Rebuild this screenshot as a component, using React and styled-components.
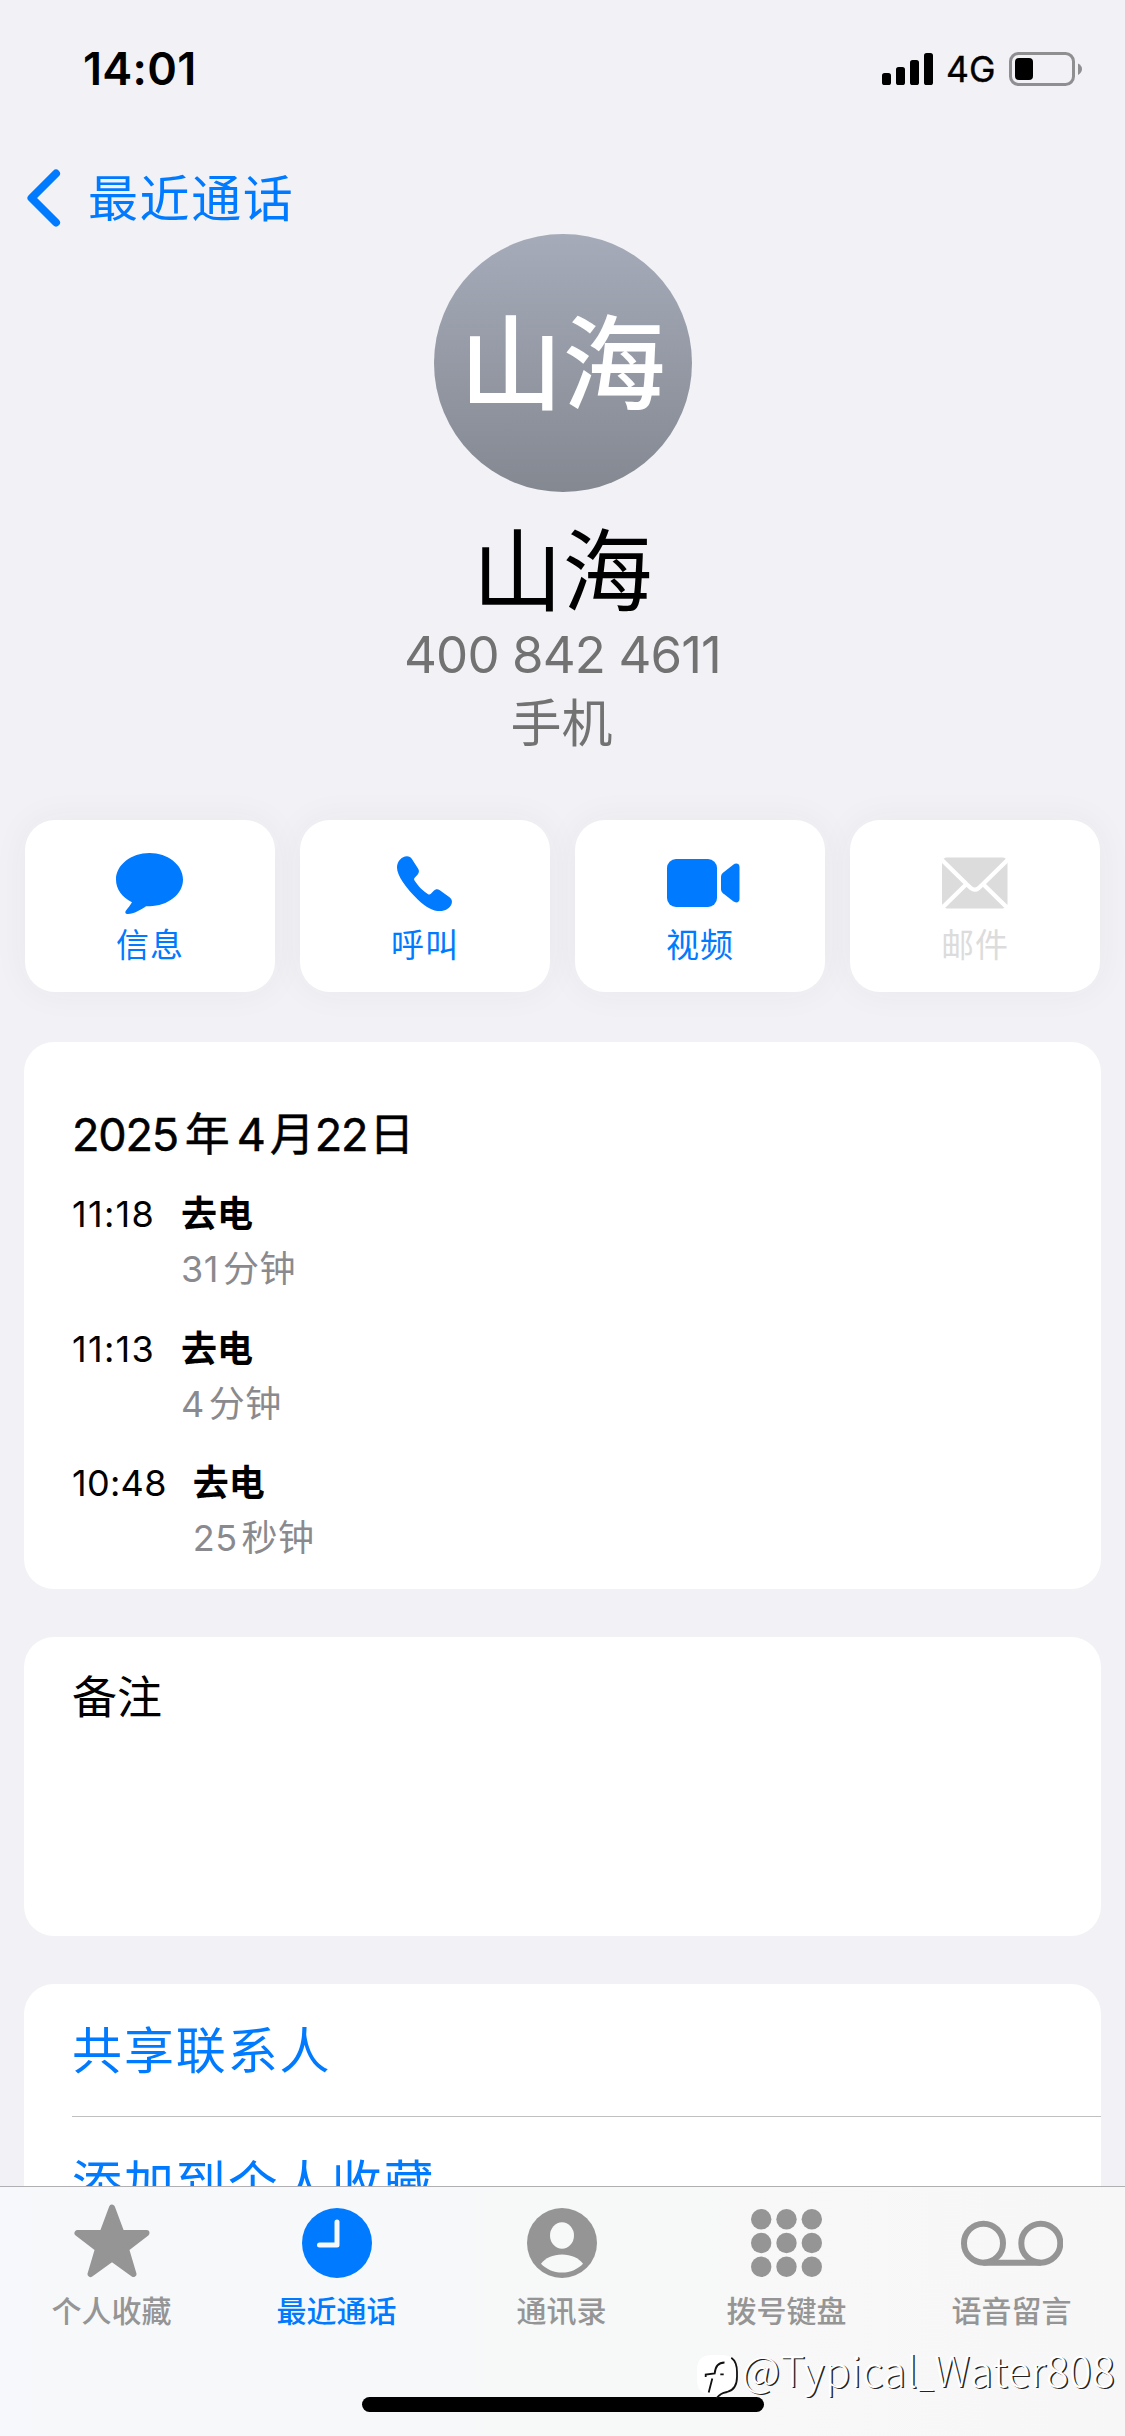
import React from 'react';
import styled, {createGlobalStyle} from 'styled-components';

const BLUE = "#007aff";
const GRAY = "#959595";

const dateParts = [
    {text: "2025", gap: 7},
    {text: "年", gap: 7},
    {text: "4", gap: 5},
    {text: "月", gap: 0},
    {text: "22", gap: 2},
    {text: "日", gap: 0},
];

// narrow digits need a little more tracking
const calls = [
    {time: "11:18", tracking: 1.3, type: "去电", num: "31", unit: "分钟"},
    {time: "11:13", tracking: 1.3, type: "去电", num: "4", unit: "分钟"},
    {time: "10:48", tracking: 0.3, type: "去电", num: "25", unit: "秒钟"},
];

const SignalIcon = () => (
    <svg width="51" height="32" viewBox="0 0 51 32">
        <rect x="0" y="20" width="9" height="12" rx="2.6"/>
        <rect x="14" y="14" width="9" height="18" rx="2.6"/>
        <rect x="28" y="7" width="9" height="25" rx="2.6"/>
        <rect x="42" y="0" width="9" height="32" rx="2.6"/>
    </svg>
);

const BatteryIcon = () => (
    <svg width="74" height="34" viewBox="0 0 74 34">
        <rect x="1.5" y="1.5" width="63" height="31" rx="8" fill="none" stroke="#8f8f91" strokeWidth="3"/>
        <path d="M69 11.5Q73 13.5 73 17T69 23Z" fill="#8f8f91"/>
        <rect x="6" y="6" width="18" height="22" rx="4"/>
    </svg>
);

const MessageIcon = () => (
    <svg width="69" height="61" viewBox="0 0 69 61">
        <path fill="currentColor" d="M33.5 0C51.8 0 67 11.8 67 26.6S51.8 53.2 33.5 53.2H30C25.8 56.3 17.5 61 12 61C9.3 61 8.7 59.3 10 57.4C12 54.8 14.5 52.2 16 49.3C6.2 44.7 0 36.5 0 26.6C0 11.8 15.2 0 33.5 0Z"/>
    </svg>
);

const PhoneIcon = () => (
    <svg width="57" height="55" viewBox="0 0 57 55">
        <path fill="currentColor" d="M10 .2C12.2 .2 13.7 1.2 14.9 3L21 12.6C22.4 14.8 22.2 16.7 20.7 18.6L17.7 21.8C16.8 22.8 17 23.6 17.7 24.8C21.3 30.3 26.3 35.4 30.8 38C32 38.8 32.9 38.7 33.9 37.7L36.5 35C38.6 33 40.5 32.7 42.8 34.2L52.2 41C54.8 42.9 55.4 44.9 54.7 47.5C53.1 52.4 48.4 55 42.8 55C36 55 29.1 51.5 21 43.7C9 32.1 0 19.5 0 11.5C0 5.5 4.5 .2 10 .2Z"/>
    </svg>
);

const VideoIcon = () => (
    <svg width="79" height="48" viewBox="-6 0 79 48">
        <rect x="0" y="0" width="50" height="48" rx="9" fill="currentColor"/>
        <path fill="currentColor" d="M54 18.2C54 16.2 54.5 15.1 56 13.7L66.2 5.7C69 3.6 72.5 4.5 72.5 8V40C72.5 43.5 69 44.4 66.2 42.3L56 34.3C54.5 32.9 54 31.8 54 29.8Z"/>
    </svg>
);

const MailIcon = () => (
    <svg width="66" height="52" viewBox="0 0 66 52">
        <rect x="0" y="0.5" width="65.5" height="51" rx="5" fill="currentColor"/>
        <path d="M-1 2L24.5 27L29 31.2Q32.7 34 36.5 31.2L41 27L66.5 2M-1 52L24.5 27M41 27L66.5 52" fill="none" stroke="#fff" strokeWidth="4.2"/>
    </svg>
);

const StarIcon = () => (
    <svg width="76" height="80" viewBox="0 -1 76 80">
        <path d="M38 3.5L47.5 29H72.5L52 44.8L59.5 70L38 54.5L16.5 70L24 44.8L3.5 29H28.5Z" fill="currentColor" stroke="currentColor" strokeWidth="6" strokeLinejoin="round"/>
    </svg>
);

const ClockIcon = () => (
    <svg width="70" height="70" viewBox="0 0 70 70">
        <circle cx="35" cy="35" r="35" fill="currentColor"/>
        <path d="M35 14V37H17.5" fill="none" stroke="#f7f8fa" strokeWidth="5" strokeLinecap="round" strokeLinejoin="round"/>
    </svg>
);

const PersonIcon = () => (
    <svg width="70" height="70" viewBox="0 0 70 70">
        <circle cx="35" cy="35" r="35" fill="currentColor"/>
        <ellipse cx="35" cy="27.5" rx="12" ry="13.2" fill="#f7f8f8"/>
        <path d="M14 55.7C18 50 26 46.4 35 46.4S52 50 56 55.7C51 61 43.5 64.5 35 64.5S19 61 14 55.7Z" fill="#f7f8f8"/>
    </svg>
);

const KeypadIcon = () => (
    <svg width="71" height="68" viewBox="0 0 71 68">
        {[10.2, 35.5, 60.8].map((x) => [10.2, 34, 57.8].map((y) => (
            <circle key={x + "-" + y} cx={x} cy={y} r="10.2" fill="currentColor"/>
        )))}
    </svg>
);

const VoicemailIcon = () => (
    <svg width="103" height="46" viewBox="-1 0 103 46">
        <g fill="none" stroke="currentColor" strokeWidth="6">
            <circle cx="22.5" cy="23.2" r="19.5"/>
            <circle cx="79.8" cy="23.2" r="19.5"/>
            <path d="M22.5 42.7H79.8"/>
        </g>
    </svg>
);

const WatermarkLogo = () => (
    <svg width="44" height="46" viewBox="0 0 44 46">
        <path d="M16 1H25C36 1 40 7 40 17V24C40 34 34 38.5 25 39.5L20 44V40H15C5 40 1 35 1 25V16C1 6 6 1 16 1Z" fill="#fff"/>
        <path d="M35.3 3.7C40 7 41 12 41 18V23C41 32 37 36.5 31 38C26 39 24 40 20.3 44.3" fill="none" stroke="#111" strokeWidth="1.8"/>
        <path d="M28.5 8.5C22 8.5 19.3 12 18.7 19.5L9.7 20.5V23M16.3 24.5L12.7 38.5M24.3 20.3H27.7" fill="none" stroke="#111" strokeWidth="1.8"/>
    </svg>
);

const actions = [
    {label: "信息", icon: <MessageIcon/>},
    {label: "呼叫", icon: <PhoneIcon/>},
    {label: "视频", icon: <VideoIcon/>},
    {label: "邮件", icon: <MailIcon/>, disabled: true},
];

const tabs = [
    {label: "个人收藏", icon: <StarIcon/>},
    {label: "最近通话", icon: <ClockIcon/>, active: true},
    {label: "通讯录", icon: <PersonIcon/>},
    {label: "拨号键盘", icon: <KeypadIcon/>},
    {label: "语音留言", icon: <VoicemailIcon/>},
];

const App = () => {
    return (
        <Screen>
            <GlobalStyle/>
            <StatusBar>
                <Clock>14:01</Clock>
                <StatusIcons>
                    <SignalIcon/>
                    <Network>4G</Network>
                    <BatteryIcon/>
                </StatusIcons>
            </StatusBar>

            <NavBar>
                <svg width="34" height="58" viewBox="0 0 34 58">
                    <path d="M29 4.5L4.5 29L29 53.5" fill="none" stroke={BLUE} strokeWidth="8" strokeLinecap="round" strokeLinejoin="round"/>
                </svg>
                <BackLabel>最近通话</BackLabel>
            </NavBar>

            <Profile>
                <Avatar>山海</Avatar>
                <Name>山海</Name>
                <Phone>400 842 4611</Phone>
                <PhoneType>手机</PhoneType>
            </Profile>

            <Actions>
                {actions.map((item) => (
                    <ActionButton key={item.label} $disabled={item.disabled}>
                        <ActionIcon>{item.icon}</ActionIcon>
                        {item.label}
                    </ActionButton>
                ))}
            </Actions>

            <HistoryCard>
                <DateTitle>
                    {dateParts.map((part) => (
                        <DatePart key={part.text} $gap={part.gap} $digits={/\d/.test(part.text)}>{part.text}</DatePart>
                    ))}
                </DateTitle>
                {calls.map((call) => (
                    <CallRow key={call.time}>
                        <CallTime $tracking={call.tracking}>{call.time}</CallTime>
                        <div>
                            <CallType>{call.type}</CallType>
                            <Duration><span>{call.num}</span>{call.unit}</Duration>
                        </div>
                    </CallRow>
                ))}
            </HistoryCard>

            <NoteCard>备注</NoteCard>

            <LinkCard>
                <LinkRow>共享联系人</LinkRow>
                <LinkRow>添加到个人收藏</LinkRow>
            </LinkCard>

            <TabBar>
                <Tabs>
                    {tabs.map((tab) => (
                        <Tab key={tab.label} $active={tab.active}>
                            <TabIcon>{tab.icon}</TabIcon>
                            {tab.label}
                        </Tab>
                    ))}
                </Tabs>
                <HomeIndicator/>
                <Watermark>
                    <WatermarkLogo/>
                    <div>@Typical<small>_</small>Water808</div>
                </Watermark>
            </TabBar>
        </Screen>
    );
};

const GlobalStyle = createGlobalStyle`
    * {
        box-sizing: border-box;
    }
    body {
        margin: 0;
        background: #f2f1f6;
    }
    svg {
        display: block;
        flex: none;
    }
`

const Screen = styled.div`
    position: relative;
    width: 1125px;
    height: 2436px;
    overflow: hidden;
    background: #f2f1f6;
    color: #000;
    font-family: Inter, "Noto Sans CJK SC", sans-serif;
`

const StatusBar = styled.div`
    display: flex;
    justify-content: space-between;
    align-items: center;
    height: 138px;
    padding: 0 42px 0 83px;
`

const Clock = styled.div`
    font-size: 45px;
    font-weight: 600;
    letter-spacing: 0.3px;
    line-height: 60px;
`

const StatusIcons = styled.div`
    display: flex;
    align-items: center;
`

const Network = styled.div`
    width: 76px;
    padding-left: 13px;
    padding-top: 2px;
    font-size: 35.5px;
    line-height: 40px;
    -webkit-text-stroke: 0.4px #000;
`

const NavBar = styled.div`
    display: flex;
    align-items: center;
    height: 96px;
    margin-top: 12px;
    padding-left: 27px;
    gap: 27px;
`

const BackLabel = styled.div`
    padding-top: 1px;
    color: ${BLUE};
    font-size: 50px;
    letter-spacing: 1.6px;
    line-height: 60px;
`

const Profile = styled.div`
    display: flex;
    flex-direction: column;
    align-items: center;
    height: 586px;
    margin-top: -12px;
`

const Avatar = styled.div`
    width: 258px;
    height: 258px;
    border-radius: 50%;
    background: linear-gradient(#a5abb9, #848891);
    color: #fff;
    font-size: 103px;
    font-weight: 500;
    line-height: 261px;
    text-align: center;
`

const Name = styled.div`
    margin-top: 25px;
    font-size: 90px;
    line-height: 110px;
`

const Phone = styled.div`
    margin-top: -2px;
    color: #727272;
    font-size: 51px;
    letter-spacing: -0.9px;
    line-height: 60px;
`

const PhoneType = styled.div`
    margin-top: 9px;
    padding-right: 2px;
    color: #727272;
    font-size: 51px;
    line-height: 60px;
`

const Actions = styled.div`
    display: grid;
    grid-template-columns: repeat(4, 1fr);
    gap: 25px;
    padding: 0 25px;
`

const ActionButton = styled.div`
    display: flex;
    flex-direction: column;
    align-items: center;
    height: 172px;
    padding-top: 29px;
    border-radius: 30px;
    background: #fff;
    box-shadow: 0 0 36px rgba(60, 60, 67, 0.05);
    color: ${(props) => props.$disabled ? "#dcdcdc" : BLUE};
    font-size: 33px;
    line-height: 40px;
    letter-spacing: 1px;
`

const ActionIcon = styled.div`
    display: flex;
    align-items: center;
    height: 68px;
    margin-bottom: 8px;
`

const Card = styled.div`
    margin: 0 24px;
    border-radius: 30px;
    background: #fff;
`

const HistoryCard = styled(Card)`
    height: 547px;
    margin-top: 50px;
    padding: 65px 48px 0;
`

const DateTitle = styled.div`
    display: flex;
    margin-bottom: 17px;
    font-size: 45px;
    line-height: 56px;
    -webkit-text-stroke: 0.5px #000;
`

const DatePart = styled.span`
    margin-right: ${(props) => props.$gap}px;
    letter-spacing: ${(props) => props.$digits ? "-1.2px" : 0};
`

const CallRow = styled.div`
    display: flex;
    gap: 26px;
    height: 134.5px;
    font-size: 36px;
`

const CallTime = styled.div`
    letter-spacing: ${(props) => props.$tracking}px;
    line-height: 68px;
`

const CallType = styled.div`
    font-weight: 700;
    line-height: 68px;
`

const Duration = styled.div`
    color: #8a8a8e;
    letter-spacing: 0.5px;
    line-height: 42px;
    span {
        margin-right: 4px;
    }
`

const NoteCard = styled(Card)`
    height: 299px;
    margin-top: 48px;
    padding: 33px 48px;
    font-size: 45px;
    line-height: 56px;
`

const LinkCard = styled(Card)`
    height: 300px;
    margin-top: 48px;
    padding-left: 48px;
`

const LinkRow = styled.div`
    height: 132px;
    color: ${BLUE};
    font-size: 50px;
    letter-spacing: 1.9px;
    line-height: 135px;
    & + & {
        border-top: 1px solid #c0c0c2;
    }
`

const TabBar = styled.div`
    position: absolute;
    left: 0;
    right: 0;
    bottom: 0;
    height: 250px;
    border-top: 1px solid #b0b0b2;
    background: linear-gradient(90deg, #f7f8fb, #f7f8f8 60%, #f7f7f8);
`

const Tabs = styled.div`
    display: grid;
    grid-template-columns: repeat(5, 1fr);
    padding-top: 16px;
`

const Tab = styled.div`
    display: flex;
    flex-direction: column;
    align-items: center;
    padding-right: 2px;
    color: ${(props) => props.$active ? BLUE : GRAY};
    font-size: 30px;
    font-weight: 500;
    line-height: 36px;
`

const TabIcon = styled.div`
    display: flex;
    align-items: center;
    height: 80px;
    margin-bottom: 10px;
`

const HomeIndicator = styled.div`
    width: 402px;
    height: 15px;
    margin: 68px auto 0;
    border-radius: 8px;
    background: #000;
`

const Watermark = styled.div`
    position: absolute;
    right: 10px;
    bottom: 36px;
    display: flex;
    align-items: center;
    gap: 2px;
    color: #fff;
    font-family: "Noto Sans CJK SC", sans-serif;
    font-size: 42px;
    font-weight: 300;
    letter-spacing: 0.5px;
    line-height: 50px;
    text-shadow: 1.5px 1px 0 #222;
    div {
        margin-top: -11px;
    }
    small {
        font-size: 28px;
    }
`

export default App;
